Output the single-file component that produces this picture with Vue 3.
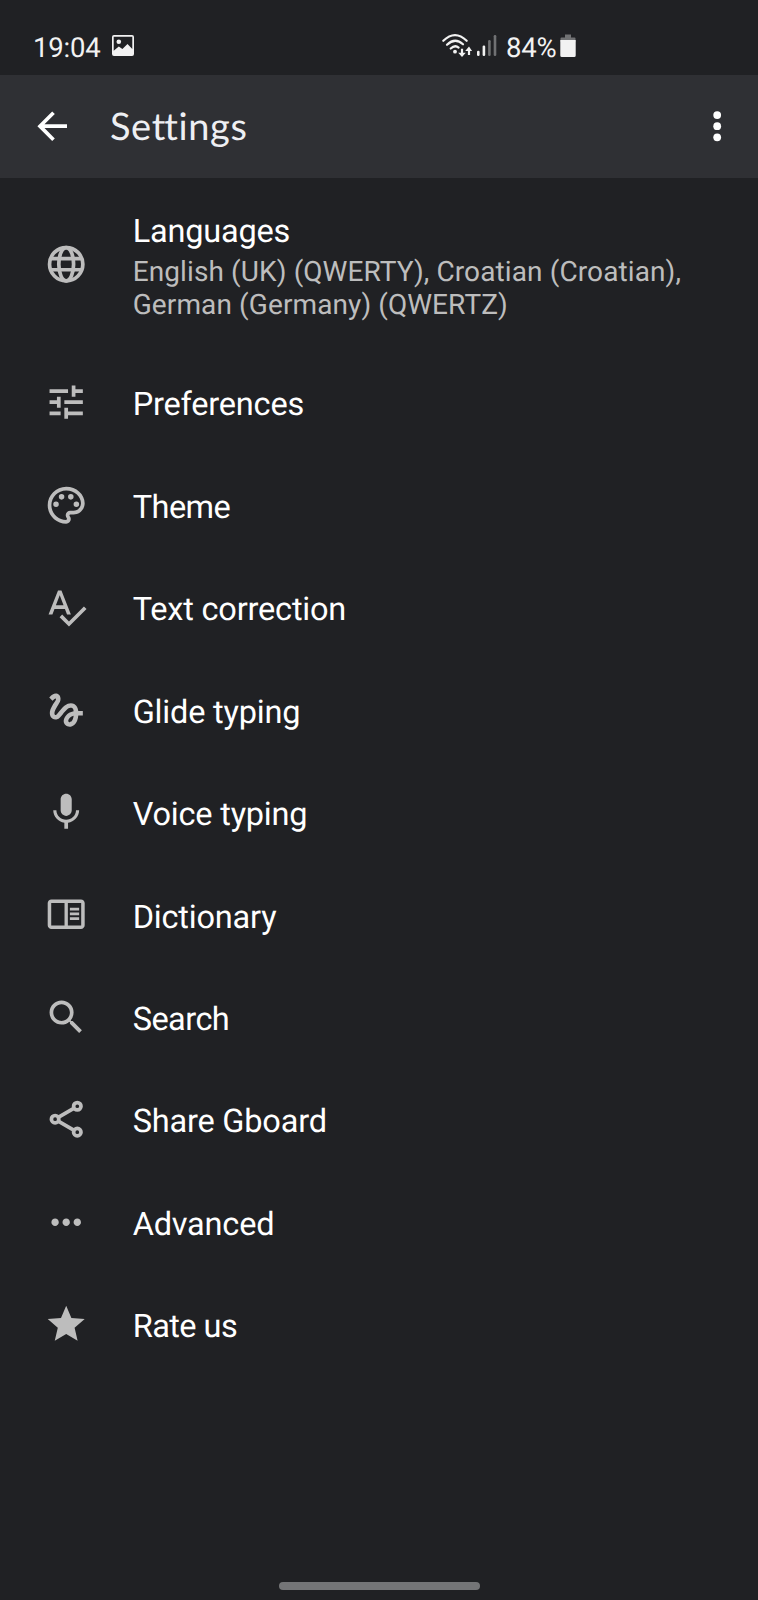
<script setup>
const items = [
  { icon: 'tune', title: 'Preferences' },
  { icon: 'palette', title: 'Theme', tight: true },
  { icon: 'spell', title: 'Text correction' },
  { icon: 'gesture', title: 'Glide typing' },
  { icon: 'mic', title: 'Voice typing' },
  { icon: 'reader', title: 'Dictionary' },
  { icon: 'search', title: 'Search', tight: true },
  { icon: 'share', title: 'Share Gboard' },
  { icon: 'more', title: 'Advanced' },
  { icon: 'star', title: 'Rate us', tight: true },
]

const paths = {
  tune: 'M3 17v2h6v-2H3zM3 5v2h10V5H3zm10 16v-2h8v-2h-8v-2h-2v6h2zM7 9v2H3v2h4v2h2V9H7zm14 4v-2H11v2h10zm-6-4h2V7h4V5h-4V3h-2v6z',
  palette: 'M12 22C6.49 22 2 17.51 2 12S6.49 2 12 2s10 4.04 10 9c0 3.31-2.69 6-6 6h-1.77c-.28 0-.5.22-.5.5 0 .12.05.23.13.33.41.47.64 1.06.64 1.67A2.5 2.5 0 0 1 12 22zm0-18c-4.41 0-8 3.59-8 8s3.59 8 8 8c.28 0 .5-.22.5-.5a.54.54 0 0 0-.14-.35c-.41-.46-.63-1.05-.63-1.65a2.5 2.5 0 0 1 2.5-2.5H16c2.21 0 4-1.79 4-4 0-3.86-3.59-7-8-7z M8 11.5a1.5 1.5 0 1 1-3 0a1.5 1.5 0 0 1 3 0z M11 7.5a1.5 1.5 0 1 1-3 0a1.5 1.5 0 0 1 3 0z M16 7.5a1.5 1.5 0 1 1-3 0a1.5 1.5 0 0 1 3 0z M19 11.5a1.5 1.5 0 1 1-3 0a1.5 1.5 0 0 1 3 0z',
  spell: 'M12.45 16h2.09L9.43 3H7.57L2.46 16h2.09l1.12-3h5.64l1.14 3zm-6.02-5L8.5 5.48 10.57 11H6.43zm15.16.59l-8.09 8.09L9.83 16l-1.41 1.41 5.09 5.09L23 13l-1.41-1.41z',
  gesture: 'M4.59 6.89c.7-.71 1.4-1.35 1.71-1.22.5.2 0 1.03-.3 1.52-.25.42-2.86 3.89-2.86 6.31 0 1.28.48 2.34 1.34 2.98.75.56 1.74.73 2.64.46 1.07-.31 1.95-1.4 3.06-2.77 1.21-1.49 2.83-3.44 4.08-3.44 1.63 0 1.65 1.01 1.76 1.79-3.78.64-5.38 3.67-5.38 5.37 0 1.7 1.44 3.09 3.21 3.09 1.63 0 4.29-1.33 4.69-6.1H21v-2.5h-2.47c-.15-1.65-1.09-4.2-4.03-4.2-2.25 0-4.18 1.91-4.94 2.84-.58.73-2.06 2.48-2.29 2.72-.25.3-.68.84-1.11.84-.45 0-.72-.83-.36-1.92.35-1.09 1.4-2.86 1.85-3.52.78-1.14 1.3-1.92 1.3-3.28C8.95 3.69 7.31 3 6.44 3 5.12 3 3.97 4 3.72 4.25c-.36.36-.66.66-.88.93l1.75 1.71zm9.29 11.66c-.31 0-.74-.26-.74-.72 0-.6.73-2.2 2.87-2.76-.3 2.69-1.43 3.48-2.13 3.48z',
  mic: 'M12 14c1.66 0 2.99-1.34 2.99-3L15 5c0-1.66-1.34-3-3-3S9 3.34 9 5v6c0 1.66 1.34 3 3 3zm5.3-3c0 3-2.54 5.1-5.3 5.1S6.7 14 6.7 11H5c0 3.41 2.72 6.23 6 6.72V21h2v-3.28c3.28-.48 6-3.3 6-6.72h-1.7z',
  reader: 'M20 4H4c-1.1 0-2 .9-2 2v12c0 1.1.9 2 2 2h16c1.1 0 2-.9 2-2V6c0-1.1-.9-2-2-2zM11.1 18.1H3.9V5.9h7.2v12.2zm9 0h-7.2V5.9h7.2v12.2zM14 8.5h5V10h-5V8.5zm0 2.6h5v1.5h-5v-1.5zm0 2.6h5v1.5h-5v-1.5z',
  search: 'M15.5 14h-.79l-.28-.27A6.47 6.47 0 0 0 16 9.5 6.5 6.5 0 1 0 9.5 16c1.61 0 3.09-.59 4.23-1.57l.27.28v.79l5 4.99L20.49 19l-4.99-5zm-6 0C7.01 14 5 11.99 5 9.5S7.01 5 9.5 5 14 7.01 14 9.5 11.99 14 9.5 14z',
  more: 'M6 10c-1.1 0-2 .9-2 2s.9 2 2 2 2-.9 2-2-.9-2-2-2zm12 0c-1.1 0-2 .9-2 2s.9 2 2 2 2-.9 2-2-.9-2-2-2zm-6 0c-1.1 0-2 .9-2 2s.9 2 2 2 2-.9 2-2-.9-2-2-2z',
  star: 'M12 17.27L18.18 21l-1.64-7.03L22 9.24l-7.19-.61L12 2 9.19 8.63 2 9.24l5.46 4.73L5.82 21z',
}
</script>

<template>
  <div class="screen">
    <div class="status">
      <span class="time">19:04</span>
      <svg class="photo" viewBox="0 0 22 22">
        <path fill-rule="evenodd" d="M2 0h18a2 2 0 0 1 2 2v17a2 2 0 0 1-2 2H2a2 2 0 0 1-2-2V2a2 2 0 0 1 2-2zM1.7 1.7v14l5.1-4.2 3.6 2.6 5.1-5.1 4.8 5V1.7z" />
        <circle cx="6.8" cy="6.8" r="2.3" />
      </svg>
      <svg class="wifi" viewBox="0 0 30 24">
        <g fill="none" stroke="#f2f2f2" stroke-width="2.2" stroke-linecap="round">
          <path d="M1.3 6.8Q13 -4.6 24.7 6.8" />
          <path d="M5 10.8Q13 3 21 10.3" />
          <path d="M8.7 14.5Q13 10.5 16.6 13.6" />
        </g>
        <circle cx="13" cy="17.7" r="1.9" />
        <path d="M18.9 14.8h2.2v4h2.7L20 23l-3.8-4.2h2.7zM25.9 21h2.2v-4h2L27 12.5 23.2 17h2.7z" />
      </svg>
      <svg class="signal" viewBox="0 0 20 22">
        <rect x="0" y="15.7" width="2.6" height="5.3" rx="1.2" />
        <rect x="5.6" y="10.5" width="2.6" height="10.5" rx="1.2" />
        <g fill="#707173">
          <rect x="11.1" y="5" width="2.6" height="16" rx="1.2" />
          <rect x="16.7" y="0" width="2.6" height="21" rx="1.2" />
        </g>
      </svg>
      <span class="percent">84%</span>
      <svg class="battery" viewBox="0 0 16 24">
        <path fill="#707173" d="M5 .5h6v3h3.5a1 1 0 0 1 1 1V8H.5V4.5a1 1 0 0 1 1-1H5z" />
        <path d="M.3 6h15.4v15.5a1.5 1.5 0 0 1-1.5 1.5H1.8a1.5 1.5 0 0 1-1.5-1.5z" />
      </svg>
    </div>

    <header class="bar">
      <svg class="back" viewBox="0 0 24 24"><path d="M20 11H7.83l5.59-5.59L12 4l-8 8 8 8 1.41-1.41L7.83 13H20v-2z" /></svg>
      <h1>Se<span class="joined">t</span>tings</h1>
      <svg class="menu" viewBox="0 0 24 24"><circle cx="12" cy="6" r="2.1" /><circle cx="12" cy="12" r="2.1" /><circle cx="12" cy="18" r="2.1" /></svg>
    </header>

    <main>
      <div class="row languages">
        <svg class="icon outlined" viewBox="0 0 24 24">
          <circle cx="12" cy="12" r="9" />
          <ellipse cx="12" cy="12" rx="4" ry="9" />
          <path d="M3.5 9h17M3.5 15h17" />
        </svg>
        <div class="copy">
          <div class="title">Languages</div>
          <div class="summary">English (UK) (QWERTY), Croatian (Croatian),<br />German (Germany) (QWERTZ)</div>
        </div>
      </div>
      <div v-for="item in items" :key="item.icon" class="row">
        <svg v-if="item.icon === 'share'" class="icon outlined" viewBox="0 0 24 24">
          <circle cx="18" cy="5" r="2" />
          <circle cx="6" cy="12" r="2" />
          <circle cx="18" cy="19" r="2" />
          <path d="M16.3 6L7.7 11M7.7 13l8.6 5" />
        </svg>
        <svg v-else class="icon" viewBox="0 0 24 24"><path fill-rule="evenodd" :d="paths[item.icon]" /></svg>
        <div class="title" :class="{ tight: item.tight }">{{ item.title }}</div>
      </div>
    </main>
    <footer><div class="handle"></div></footer>
  </div>
</template>

<style>
body {
  margin: 0;
  background: #202124;
}
</style>

<style scoped>
.screen {
  width: 758px;
  height: 1600px;
  display: flex;
  flex-direction: column;
  background: #202124;
  color: #fff;
  font-family: Roboto, sans-serif;
  text-rendering: geometricPrecision;
  overflow: hidden;
}
svg {
  display: block;
  flex: none;
  fill: #f2f2f2;
}
.status {
  height: 75px;
  box-sizing: border-box;
  padding: 33px 0 0 33px;
  display: flex;
  align-items: flex-start;
  color: #f2f2f2;
  font-size: 27.5px;
  line-height: 30px;
}
.time {
  width: 79px;
  letter-spacing: -0.2px;
}
.photo {
  width: 22px;
  height: 22px;
  margin-top: 2px;
}
.wifi {
  width: 30px;
  height: 24px;
  margin: 1px 0 0 308px;
  overflow: visible;
}
.signal {
  width: 20px;
  height: 22px;
  margin: 2px 0 0 5px;
}
.percent {
  width: 54px;
  margin-left: 9px;
  white-space: nowrap;
  letter-spacing: -0.2px;
}
.battery {
  width: 16px;
  height: 24px;
  margin-top: 1px;
}
.bar {
  height: 103px;
  box-sizing: border-box;
  padding: 0 18.5px 0 29.5px;
  display: flex;
  align-items: center;
  background: #2f3034;
  flex: none;
}
.back,
.menu {
  width: 44.4px;
  height: 44.4px;
  fill: #fff;
}
h1 {
  flex: 1;
  margin: -2px 0 0 36px;
  font: 400 38px / 48px Lato, sans-serif;
  letter-spacing: 0.6px;
  color: #eeeff3;
}
.joined {
  letter-spacing: -1px;
}
main {
  flex: 1;
}
.row {
  height: 102.45px;
  display: flex;
  align-items: center;
  padding-left: 44.3px;
}
.languages {
  height: 173.2px;
}
.icon {
  width: 44.4px;
  height: 44.4px;
  margin-right: 44px;
  fill: #bdbdbd;
}
.outlined {
  fill: none;
  stroke: #bdbdbd;
  stroke-width: 2;
}
.title {
  font-size: 32.5px;
  line-height: 38px;
  padding-top: 4px;
  letter-spacing: -0.2px;
}
.tight {
  letter-spacing: -0.55px;
}
.languages .title {
  padding: 3px 0 5px;
}
.summary {
  font-size: 28px;
  line-height: 33px;
  letter-spacing: 0.11px;
  color: #bdbdbd;
  white-space: nowrap;
}
footer {
  height: 18px;
  display: flex;
  justify-content: center;
}
.handle {
  width: 201px;
  height: 8px;
  border-radius: 4px;
  background: #747577;
}
</style>
